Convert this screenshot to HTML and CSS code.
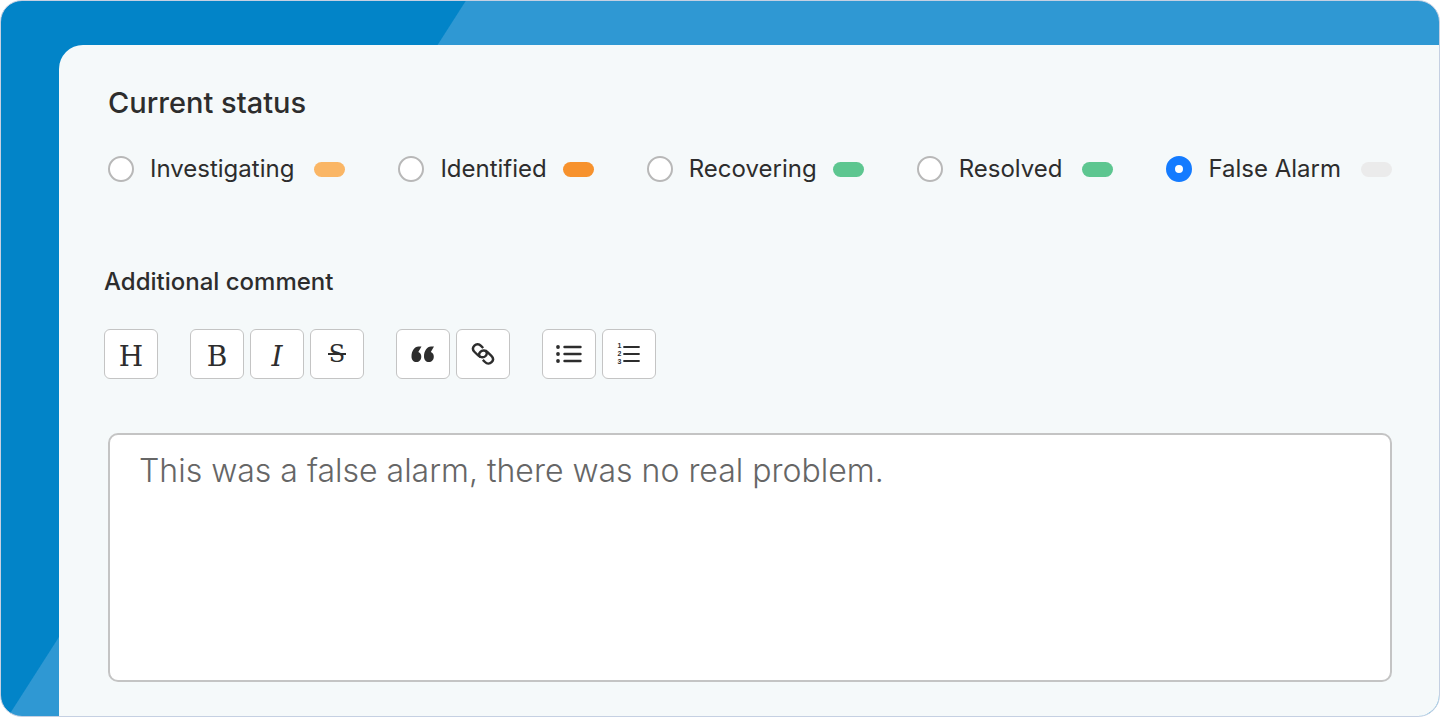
FILE: index.html
```html
<!DOCTYPE html>
<html lang="en">
<head>
    <meta charset="UTF-8">
    <meta name="viewport" content="width=device-width, initial-scale=1.0">
    <title>Incident update</title>
    <link rel="stylesheet" href="styles.css">
</head>
<body>
    <div class="frame">
        <main class="panel">
            <fieldset class="status">
                <legend>Current status</legend>
                <div class="status-options">
                    <label class="option option-wide">
                        <input type="radio" name="status" value="investigating">
                        <span>Investigating</span>
                        <i class="pill investigating"></i>
                    </label>
                    <label class="option">
                        <input type="radio" name="status" value="identified">
                        <span>Identified</span>
                        <i class="pill identified"></i>
                    </label>
                    <label class="option">
                        <input type="radio" name="status" value="recovering">
                        <span>Recovering</span>
                        <i class="pill recovering"></i>
                    </label>
                    <label class="option option-wide">
                        <input type="radio" name="status" value="resolved">
                        <span>Resolved</span>
                        <i class="pill resolved"></i>
                    </label>
                    <label class="option option-wide">
                        <input type="radio" name="status" value="false-alarm" checked>
                        <span>False Alarm</span>
                        <i class="pill false-alarm"></i>
                    </label>
                </div>
            </fieldset>

            <label class="comment-label" for="comment">Additional comment</label>

            <div class="toolbar">
                <div class="group">
                    <button type="button" class="tool" title="Heading">H</button>
                </div>
                <div class="group">
                    <button type="button" class="tool" title="Bold">B</button>
                    <button type="button" class="tool italic" title="Italic">I</button>
                    <button type="button" class="tool strike" title="Strikethrough"><span>S</span></button>
                </div>
                <div class="group">
                    <button type="button" class="tool icon" title="Quote">
                        <svg width="24" height="18" viewBox="0 0 24 18" fill="#2d2d2d">
                            <path d="M10.500 1.500L7.300 7C9.200 7.600 10.300 9.300 10.300 11.700C10.300 14.800 8.200 17 5.400 17C2.500 17 .5 14.800 .5 11.400C.5 6 3.500 1.500 7.500 1.500Z"/>
                            <path d="M23 1.500L19.800 7C21.700 7.600 22.800 9.300 22.800 11.700C22.800 14.800 20.700 17 17.900 17C15 17 13 14.800 13 11.400C13 6 16 1.500 20 1.500Z"/>
                        </svg>
                    </button>
                    <button type="button" class="tool icon" title="Link">
                        <svg width="24" height="24" viewBox="0 0 24 24" fill="none" stroke="#2d2d2d" stroke-width="2.400">
                            <path d="M12.200 6L10 3.800C8 1.800 5.200 1.800 3.400 3.600C1.600 5.400 1.600 8 3.600 10L7.200 13.500C9.500 15.700 12.800 15.800 14.600 14C16.200 12.400 16.200 10.200 14.600 8.600"/>
                            <path d="M11.800 17.800L14 20C16 22 18.800 22 20.600 20.200C22.400 18.400 22.400 15.800 20.400 13.800L16.800 10.300C14.500 8.100 11.200 8 9.400 9.800C7.800 11.400 7.800 13.600 9.400 15.200"/>
                        </svg>
                    </button>
                </div>
                <div class="group">
                    <button type="button" class="tool icon" title="Bulleted list">
                        <svg width="26" height="20" viewBox="0 0 26 20" fill="#2d2d2d" stroke="#2d2d2d" stroke-linecap="round">
                            <path stroke-width="2.400" d="M8.500 3H24.500M8.500 10H24.500M8.500 17H24.500"/>
                            <g stroke="none">
                                <circle cx="2" cy="3" r="1.900"/>
                                <circle cx="2" cy="10" r="1.900"/>
                                <circle cx="2" cy="17" r="1.900"/>
                            </g>
                        </svg>
                    </button>
                    <button type="button" class="tool icon" title="Numbered list">
                        <span class="numbers"><b>1</b><b>2</b><b>3</b></span>
                        <svg width="17" height="20" viewBox="0 0 17 20" fill="none" stroke="#2d2d2d" stroke-width="1.800" stroke-linecap="round">
                            <path d="M1 3H16M1 10H16M1 17H16"/>
                        </svg>
                    </button>
                </div>
            </div>

            <textarea id="comment" class="comment" spellcheck="false">This was a false alarm, there was no real problem.</textarea>
        </main>
    </div>
</body>
</html>
```
FILE: styles.css
```css
:root {
    --blue: #0284c8;
    --blue-light: #2f98d3;
    --panel: #f5f9fa;
    --text: #2d2d2d;
    --border: #c4c4c4;
}

* {
    box-sizing: border-box;
}

body {
    margin: 0;
    font-family: Inter, sans-serif;
    background-color: #fff;
    color: var(--text);
}

.frame {
    display: flex;
    min-height: 100vh;
    padding: 44px 0 0 58px;
    border: 1px solid #c5d0e2;
    border-radius: 22px;
    overflow: hidden;
    background: linear-gradient(122.6deg, var(--blue) 391px, var(--blue-light) 392px);
}

.panel {
    flex: 1;
    display: flex;
    flex-direction: column;
    padding: 40px 47px 34px 49px;
    border-top-left-radius: 24px;
    background-color: var(--panel);
}

.status {
    margin: 0;
    padding: 0;
    border: 0;
}

.status legend {
    padding: 0;
    font-size: 29px;
    font-weight: 500;
    line-height: 36px;
}

.status-options {
    display: flex;
    justify-content: space-between;
    margin-top: 31px;
}

.option {
    display: flex;
    align-items: center;
    gap: 16px;
    font-size: 24px;
    line-height: 34px;
    cursor: pointer;
}

.option-wide .pill {
    margin-left: 4px;
}

.option input {
    appearance: none;
    width: 26px;
    height: 26px;
    margin: 0;
    border: 2px solid #b8b8b8;
    border-radius: 50%;
    background-color: #fff;
}

.option input:checked {
    border: 9px solid #147bff;
}

.pill {
    width: 31px;
    height: 15px;
    border-radius: 8px;
}

.investigating { background-color: #fab665; }
.identified { background-color: #f7922d; }
.recovering,
.resolved { background-color: #5dc690; }
.false-alarm { background-color: #ebebeb; }

.comment-label {
    align-self: flex-start;
    margin: 80px 0 0 -4px;
    font-size: 24px;
    font-weight: 500;
    line-height: 32px;
}

.toolbar {
    display: flex;
    flex-wrap: wrap;
    gap: 32px;
    margin: 31px 0 0 -4px;
}

.group {
    display: flex;
    gap: 6px;
}

.tool {
    display: flex;
    align-items: center;
    justify-content: center;
    width: 54px;
    height: 50px;
    padding: 6px 0 0;
    border: 1px solid var(--border);
    border-radius: 6px;
    background-color: #fff;
    color: var(--text);
    font-family: "DejaVu Serif", serif;
    font-size: 28px;
    line-height: 32px;
    cursor: pointer;
}

.italic {
    font-style: italic;
}

.icon,
.strike {
    padding: 0;
}

.strike {
    font-size: 24px;
}

.strike span {
    padding: 0 1px;
    background: linear-gradient(var(--text), var(--text)) center / 100% 2px no-repeat;
}

.numbers {
    display: grid;
    margin-right: 2px;
    font-family: "Liberation Sans", sans-serif;
    font-size: 7px;
    line-height: 8px;
}

.comment {
    flex: 1;
    width: 100%;
    min-height: 160px;
    margin-top: 54px;
    padding: 14px 29px;
    border: 2px solid var(--border);
    border-radius: 10px;
    outline: none;
    resize: none;
    background-color: #fff;
    color: #666;
    font-family: inherit;
    font-size: 32px;
    font-weight: 300;
    line-height: 44px;
}
```
